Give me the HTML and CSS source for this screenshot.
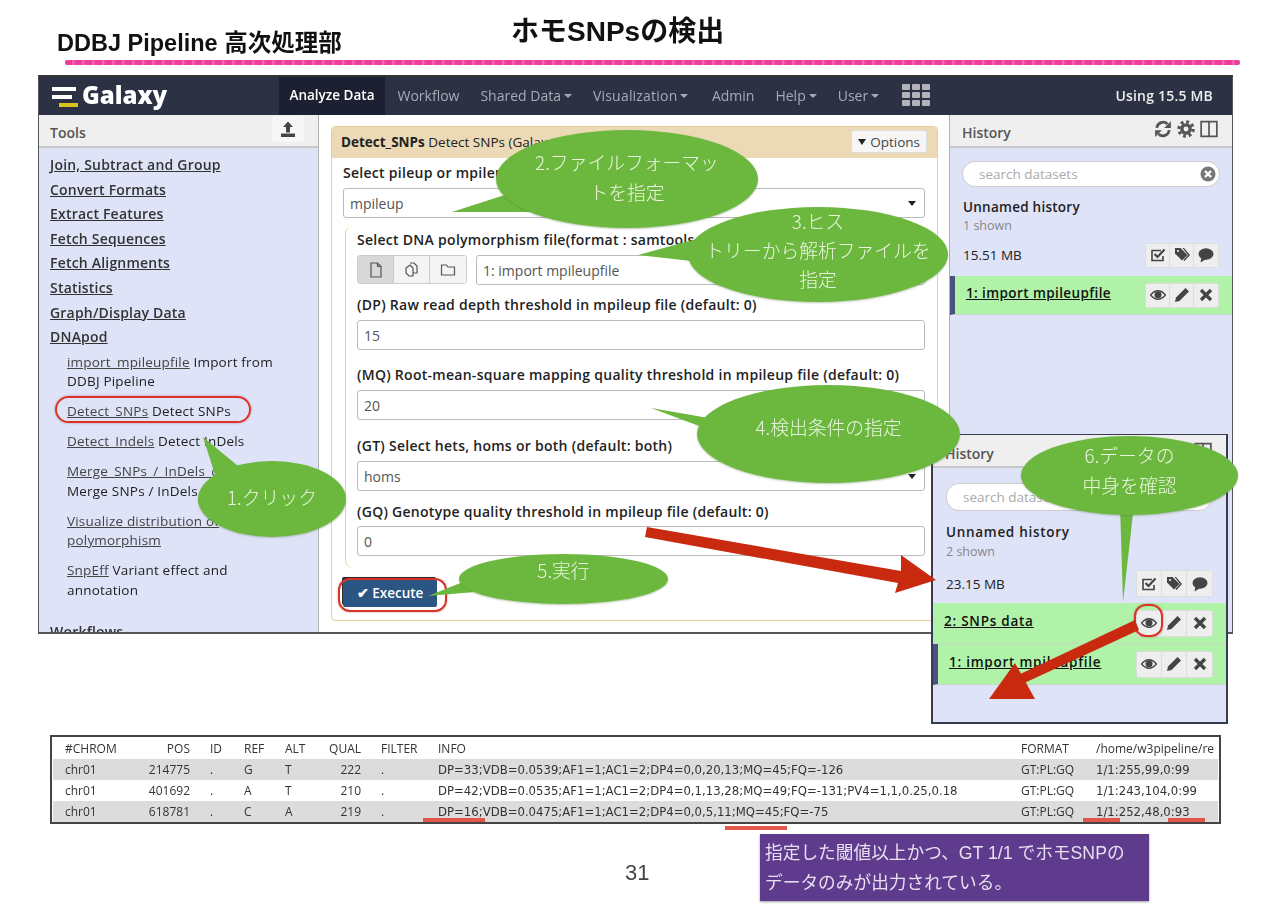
FILE: index.html

```html
<!DOCTYPE html>
<html lang="ja">
    <head>
        <meta charset="UTF-8">
        <title>ホモSNPsの検出</title>
        <link rel="stylesheet" href="styles.css">
    </head>
    <body>
    <svg class="sprite" xmlns="http://www.w3.org/2000/svg">
        <symbol id="i-upload" viewBox="0 0 16 16"><path d="M8 .5 13 6H10v5.500H6V6H3zM1 12.500h14V16H1z"/></symbol>
        <symbol id="i-refresh" viewBox="0 0 16 16"><path d="M2.500 7A5.600 5.600 0 0 1 12 3.600" fill="none" stroke="currentColor" stroke-width="2.400"/><path d="M15 1v6H9z"/><path d="M13.500 9A5.600 5.600 0 0 1 4 12.400" fill="none" stroke="currentColor" stroke-width="2.400"/><path d="M1 15V9h6z"/></symbol>
        <symbol id="i-gear" viewBox="0 0 16 16"><circle cx="8" cy="8" r="6.300" fill="none" stroke="currentColor" stroke-width="3" stroke-dasharray="2.500 2.450"/><circle cx="8" cy="8" r="3.700" fill="none" stroke="currentColor" stroke-width="3"/></symbol>
        <symbol id="i-columns" viewBox="0 0 16 16"><path d="M1 1.500h14v13H1zM8 1.500v13" fill="none" stroke="currentColor" stroke-width="1.500"/></symbol>
        <symbol id="i-clear" viewBox="0 0 16 16"><circle cx="8" cy="8" r="7.500"/><path d="M5 5l6 6M11 5l-6 6" stroke="#fff" stroke-width="2.400"/></symbol>
        <symbol id="i-check" viewBox="0 0 16 16"><path d="M13 9v4.500H2v-10h9" fill="none" stroke="currentColor" stroke-width="1.600"/><path d="M4.500 7l3 3 7-7.500" fill="none" stroke="currentColor" stroke-width="2.200"/></symbol>
        <symbol id="i-tags" viewBox="0 0 16 16"><path d="M1 1h5.500l7 7-5.500 5.500-7-7z"/><path d="M8.500 1H10l6 7-5.500 6-1-1 4.500-5z"/><circle cx="4" cy="4" r="1.100" fill="#eee"/></symbol>
        <symbol id="i-comment" viewBox="0 0 16 16"><ellipse cx="8" cy="7" rx="7.500" ry="5.700"/><path d="M3.500 10.500 2.500 15.500 8 12z"/></symbol>
        <symbol id="i-eye" viewBox="0 0 16 16"><path d="M.5 8Q8-.5 15.500 8 8 16.500.5 8z" fill="none" stroke="currentColor" stroke-width="1.300"/><circle cx="8" cy="7.800" r="3.500"/></symbol>
        <symbol id="i-pencil" viewBox="0 0 16 16"><path d="M11.500 1l3.500 3.500-9.500 9.500L1 15l1-4.500z"/></symbol>
        <symbol id="i-times" viewBox="0 0 16 16"><path d="M3 3l10 10M13 3 3 13" fill="none" stroke="currentColor" stroke-width="3.300"/></symbol>
        <symbol id="i-file" viewBox="0 0 16 16"><path d="M3 1h6.500L13 4.500V15H3zM9.500 1v3.500H13" fill="none" stroke="currentColor" stroke-width="1.200"/></symbol>
        <symbol id="i-files" viewBox="0 0 16 16"><path d="M6 1h4l3 3v7H9M2 6l4-3 3 3v8H5L2 11z" fill="none" stroke="currentColor" stroke-width="1.200"/></symbol>
        <symbol id="i-folder" viewBox="0 0 16 16"><path d="M1.500 3h5l1.500 2h6.500v8h-13z" fill="none" stroke="currentColor" stroke-width="1.200"/></symbol>
    </svg>

    <div class="slide">
        <header class="slide-head">
            <div class="title-row">
                <h2 class="subtitle">DDBJ Pipeline 高次処理部</h2>
                <h1 class="title">ホモSNPsの検出</h1>
            </div>
            <div class="pink-line"></div>
        </header>

        <div class="galaxy">
            <nav class="masthead">
                <div class="brand">
                    <svg class="logo" viewBox="0 0 26 22"><rect x="0" y="2" width="24" height="4" fill="#fff"/><rect x="0" y="10" width="20" height="4" fill="#fff"/><rect x="7" y="18" width="19" height="4" fill="#d8c61c"/></svg>
                    <span>Galaxy</span>
                </div>
                <a class="nav-item active">Analyze Data</a>
                <a class="nav-item">Workflow</a>
                <a class="nav-item caret">Shared Data</a>
                <a class="nav-item caret viz">Visualization</a>
                <a class="nav-item">Admin</a>
                <a class="nav-item caret">Help</a>
                <a class="nav-item caret">User</a>
                <div class="apps">
                    <i></i><i></i><i></i><i></i><i></i><i></i><i></i><i></i><i></i>
                </div>
                <div class="quota">Using 15.5 MB</div>
            </nav>

            <div class="panels">
                <aside class="tools">
                    <div class="panel-head">
                        <span>Tools</span>
                        <span class="upload"><svg class="icon"><use href="#i-upload"/></svg></span>
                    </div>
                    <div class="tool-list">
                        <a class="section">Join, Subtract and Group</a>
                        <a class="section">Convert Formats</a>
                        <a class="section">Extract Features</a>
                        <a class="section">Fetch Sequences</a>
                        <a class="section">Fetch Alignments</a>
                        <a class="section">Statistics</a>
                        <a class="section">Graph/Display Data</a>
                        <a class="section">DNApod</a>
                        <p class="tool first-tool"><u>import_mpileupfile</u> Import from<br>DDBJ Pipeline</p>
                        <p class="tool"><u>Detect_SNPs</u> Detect SNPs</p>
                        <p class="tool"><u>Detect_Indels</u> Detect InDels</p>
                        <p class="tool"><u>Merge_SNPs_/_InDels_data</u><br>Merge SNPs / InDels data</p>
                        <p class="tool"><u>Visualize distribution of</u><br><u>polymorphism</u></p>
                        <p class="tool"><u>SnpEff</u> Variant effect and<br>annotation</p>
                        <a class="section workflows">Workflows</a>
                    </div>
                </aside>

                <main class="center">
                    <div class="form">
                        <div class="form-head">
                            <span><b>Detect_SNPs</b> Detect SNPs (Galaxy Version 1.0.0)</span>
                            <span class="options"><i class="tri"></i>Options</span>
                        </div>
                        <div class="form-body">
                            <label class="first">Select pileup or mpileup file format</label>
                            <div class="field select">mpileup</div>
                            <div class="section-block">
                                <label>Select DNA polymorphism file(format : samtools mpileup)</label>
                                <div class="file-row">
                                    <div class="btn-group">
                                        <span class="on"><svg class="icon"><use href="#i-file"/></svg></span>
                                        <span><svg class="icon"><use href="#i-files"/></svg></span>
                                        <span><svg class="icon"><use href="#i-folder"/></svg></span>
                                    </div>
                                    <div class="field select grow">1: import mpileupfile</div>
                                </div>
                                <label class="l-dp">(DP) Raw read depth threshold in mpileup file (default: 0)</label>
                                <div class="field">15</div>
                                <label class="l-mq">(MQ) Root-mean-square mapping quality threshold in mpileup file (default: 0)</label>
                                <div class="field">20</div>
                                <label class="l-gt">(GT) Select hets, homs or both (default: both)</label>
                                <div class="field select">homs</div>
                                <label class="l-gq">(GQ) Genotype quality threshold in mpileup file (default: 0)</label>
                                <div class="field">0</div>
                            </div>
                            <button class="execute">✔ Execute</button>
                        </div>
                    </div>
                </main>

                <aside class="history">
                    <div class="panel-head">
                        <span>History</span>
                        <span class="head-icons">
                            <svg class="icon"><use href="#i-refresh"/></svg>
                            <svg class="icon"><use href="#i-gear"/></svg>
                            <svg class="icon"><use href="#i-columns"/></svg>
                        </span>
                    </div>
                    <div class="history-body">
                        <div class="search">search datasets<svg class="icon clear"><use href="#i-clear"/></svg></div>
                        <div class="history-name">Unnamed history</div>
                        <div class="history-count">1 shown</div>
                        <div class="history-meta">
                            <span>15.51 MB</span>
                            <span class="icon-btns">
                                <span><svg class="icon"><use href="#i-check"/></svg></span>
                                <span><svg class="icon"><use href="#i-tags"/></svg></span>
                                <span><svg class="icon"><use href="#i-comment"/></svg></span>
                            </span>
                        </div>
                        <div class="dataset barred">
                            <a>1: import mpileupfile</a>
                            <span class="icon-btns">
                                <span><svg class="icon"><use href="#i-eye"/></svg></span>
                                <span><svg class="icon"><use href="#i-pencil"/></svg></span>
                                <span><svg class="icon"><use href="#i-times"/></svg></span>
                            </span>
                        </div>
                    </div>
                </aside>
            </div>
        </div>

        <section class="vcf">
            <table>
                <colgroup>
                    <col class="c-chrom"><col class="c-pos"><col class="c-id"><col class="c-ref"><col class="c-alt"><col class="c-qual"><col class="c-filter"><col class="c-info"><col class="c-format"><col>
                </colgroup>
                <tr><td class="first-col">#CHROM</td><td class="num">POS</td><td class="pad">ID</td><td>REF</td><td>ALT</td><td class="num">QUAL</td><td class="pad">FILTER</td><td>INFO</td><td>FORMAT</td><td>/home/w3pipeline/re</td></tr>
                <tr class="shade"><td class="first-col">chr01</td><td class="num">214775</td><td class="pad">.</td><td>G</td><td>T</td><td class="num">222</td><td class="pad">.</td><td class="wide">DP=33;VDB=0.0539;AF1=1;AC1=2;DP4=0,0,20,13;MQ=45;FQ=-126</td><td>GT:PL:GQ</td><td class="wide">1/1:255,99,0:99</td></tr>
                <tr><td class="first-col">chr01</td><td class="num">401692</td><td class="pad">.</td><td>A</td><td>T</td><td class="num">210</td><td class="pad">.</td><td class="wide">DP=42;VDB=0.0535;AF1=1;AC1=2;DP4=0,1,13,28;MQ=49;FQ=-131;PV4=1,1,0.25,0.18</td><td>GT:PL:GQ</td><td class="wide">1/1:243,104,0:99</td></tr>
                <tr class="shade"><td class="first-col">chr01</td><td class="num">618781</td><td class="pad">.</td><td>C</td><td>A</td><td class="num">219</td><td class="pad">.</td><td class="wide">DP=16;VDB=0.0475;AF1=1;AC1=2;DP4=0,0,5,11;MQ=45;FQ=-75</td><td>GT:PL:GQ</td><td class="wide">1/1:252,48,0:93</td></tr>
            </table>
        </section>

        <footer class="slide-foot">
            <div class="page-no">31</div>
            <div class="note">指定した閾値以上かつ、GT 1/1 でホモSNPの<br>データのみが出力されている。</div>
        </footer>

        <!-- 上に重ねるもの -->
        <aside class="history history-2">
            <div class="panel-head">
                <span>History</span>
                <span class="head-icons">
                    <svg class="icon"><use href="#i-columns"/></svg>
                </span>
            </div>
            <div class="history-body">
                <div class="search">search datasets<svg class="icon clear"><use href="#i-clear"/></svg></div>
                <div class="history-name">Unnamed history</div>
                <div class="history-count">2 shown</div>
                <div class="history-meta">
                    <span>23.15 MB</span>
                    <span class="icon-btns">
                        <span><svg class="icon"><use href="#i-check"/></svg></span>
                        <span><svg class="icon"><use href="#i-tags"/></svg></span>
                        <span><svg class="icon"><use href="#i-comment"/></svg></span>
                    </span>
                </div>
                <div class="dataset">
                    <a>2: SNPs data</a>
                    <span class="icon-btns">
                        <span><svg class="icon"><use href="#i-eye"/></svg></span>
                        <span><svg class="icon"><use href="#i-pencil"/></svg></span>
                        <span><svg class="icon"><use href="#i-times"/></svg></span>
                    </span>
                </div>
                <div class="dataset barred">
                    <a>1: import mpileupfile</a>
                    <span class="icon-btns">
                        <span><svg class="icon"><use href="#i-eye"/></svg></span>
                        <span><svg class="icon"><use href="#i-pencil"/></svg></span>
                        <span><svg class="icon"><use href="#i-times"/></svg></span>
                    </span>
                </div>
            </div>
        </aside>

        <div class="ring ring-tool"></div>
        <div class="ring ring-exec"></div>
        <div class="ring ring-eye"></div>
        <div class="mark mark-a"></div>
        <div class="mark mark-b"></div>
        <div class="mark mark-c"></div>
        <div class="mark mark-d"></div>

        <svg class="overlay" viewBox="0 0 1280 904">
            <g fill="#6cb83f">
                <polygon points="203,437 238,466 216,478"/>
                <polygon points="452,212 520,190 530,212"/>
                <polygon points="638,255 700,238 700,262"/>
                <polygon points="651,408 720,420 715,432"/>
                <polygon points="428,596 468,580 475,592"/>
                <polygon points="1123,602 1120,505 1134,505"/>
            </g>
        </svg>
        <div class="callout c1">1.クリック</div>
        <div class="callout c2">2.ファイルフォーマッ<br>トを指定</div>
        <div class="callout c3">3.ヒス<br>トリーから解析ファイルを<br>指定</div>
        <div class="callout c4">4.検出条件の指定</div>
        <div class="callout c5">5.実行</div>
        <div class="callout c6">6.データの<br>中身を確認</div>
        <svg class="overlay" viewBox="0 0 1280 904">
            <g fill="#c9290f">
                <polygon points="647,527 645,537 898,583 895,593 936,580 901,555 901,571"/>
                <polygon points="1135,620 1139,630 1020,685 1016,676"/>
                <polygon points="1015,663 1035,699 989,699"/>
            </g>
        </svg>
    </div>
    </body>
</html>
```

FILE: styles.css

```css
* {
    box-sizing: border-box;
}
html, body {
    margin: 0;
    padding: 0;
    background-color: white;
}
body {
    font-family: 'Open Sans', 'Noto Sans CJK JP', sans-serif;
    font-size: 13px;
    color: #222;
}
.sprite {
    display: none;
}
.icon {
    width: 16px;
    height: 16px;
    fill: currentColor;
    display: block;
}
.slide {
    position: relative;
    width: 1280px;
    height: 904px;
    overflow: hidden;
    filter: blur(0.35px);
}

/* slide head */
.slide-head {
    height: 75px;
}
.title-row {
    display: flex;
    height: 60px;
    padding-left: 57px;
    font-family: 'Liberation Sans', 'Noto Sans CJK JP', sans-serif;
    color: #111;
}
.subtitle {
    margin: 28px 0 0;
    width: 454px;
    font-size: 23.500px;
    line-height: 30px;
    font-weight: bold;
}
.title {
    margin: 15px 0 0;
    font-size: 28px;
    line-height: 34px;
    font-weight: bold;
}
.pink-line {
    margin-left: 65px;
    width: 1175px;
    height: 5px;
    background: repeating-linear-gradient(90deg, #ee3c9c 0, #ee3c9c 7px, #f47cbc 8px, #ee3c9c 10px);
    border-radius: 2px;
}

/* galaxy window */
.galaxy {
    margin-left: 38px;
    width: 1195px;
    height: 559px;
    border: 1px solid #555;
    border-top: 2px solid #333;
    border-bottom: 2px solid #555;
    overflow: hidden;
}
.masthead {
    display: flex;
    align-items: stretch;
    height: 38px;
    background-color: #2c3143;
    color: #a8abb6;
}
.brand {
    width: 240px;
    padding-left: 13px;
    display: flex;
    align-items: center;
    gap: 4px;
    color: white;
    font-family: 'Open Sans', sans-serif;
    font-weight: 800;
    font-size: 24px;
}
.brand span {
    margin-top: -3px;
}
.logo {
    width: 26px;
    height: 24px;
}
.nav-item {
    padding: 0 10.500px 2px;
    display: flex;
    align-items: center;
    font-size: 14px;
    font-weight: 500;
}
.nav-item.active {
    margin-right: 2px;
    background-color: #1d2030;
    color: white;
    font-size: 13.500px;
    font-weight: 600;
}
.nav-item.viz {
    padding-right: 13px;
    letter-spacing: 0.2px;
}
.nav-item.caret::after {
    content: "";
    margin-left: 3px;
    margin-top: 2px;
    border-top: 4px solid #a8abb6;
    border-left: 4px solid transparent;
    border-right: 4px solid transparent;
}
.apps {
    margin: 7px 0 0 12px;
    width: 28px;
    height: 23px;
    display: grid;
    grid-template-columns: repeat(3, 8px);
    grid-auto-rows: 6px;
    gap: 2px;
}
.apps i {
    background-color: #b3b4ba;
    border-radius: 1px;
}
.quota {
    margin-left: auto;
    padding-right: 19px;
    padding-bottom: 2px;
    display: flex;
    align-items: center;
    color: #eee;
    font-size: 14px;
    letter-spacing: 0.2px;
    font-weight: 600;
}
.panels {
    display: grid;
    grid-template-columns: 280px 1fr 283px;
    height: 518px;
}
.panel-head {
    height: 33px;
    padding: 3px 11px 0;
    display: flex;
    justify-content: space-between;
    align-items: center;
    background-color: #efefef;
    border-bottom: 2px solid #c8c8c8;
    font-size: 14px;
    font-weight: 600;
    color: #555;
}

/* tools */
.tools {
    background-color: #dfe3f8;
    border-right: 1px solid #b0b0b0;
    overflow: hidden;
}
.upload {
    width: 32px;
    height: 26px;
    margin-right: 3px;
    margin-top: -7px;
    display: flex;
    align-items: center;
    justify-content: center;
    background-color: #f6f6f6;
    border-radius: 3px;
    color: #444;
}
.tool-list {
    padding: 5px 11px 0;
}
.section {
    display: block;
    width: fit-content;
    line-height: 24.600px;
    font-size: 14px;
    letter-spacing: 0.2px;
    font-weight: 600;
    color: #333;
    text-decoration: underline;
}
.tool {
    margin: 0 0 10.500px 17px;
    line-height: 19.500px;
    font-size: 13.500px;
    letter-spacing: 0.2px;
    color: #222;
}
.first-tool {
    margin-top: 3px;
}
.tool u {
    color: #444;
}
.workflows {
    margin-top: 20px;
}

/* center form */
.center {
    padding: 11px 11px 0 12px;
    background-color: white;
}
.form {
    height: 495px;
    border: 1px solid #e5cf9c;
    border-radius: 4px;
    overflow: hidden;
}
.form-head {
    height: 31px;
    padding: 0 10px 2px 9px;
    display: flex;
    justify-content: space-between;
    align-items: center;
    background-color: #ebdab5;
    font-size: 13.500px;
    color: #222;
}
.form-head b {
    font-weight: 700;
}
.options {
    display: flex;
    align-items: center;
    gap: 4px;
    height: 23px;
    padding: 0 6px;
    background-color: #f6f6f6;
    border: 1px solid #ddd;
    border-radius: 3px;
    color: #444;
}
.tri {
    border-top: 6px solid #222;
    border-left: 4px solid transparent;
    border-right: 4px solid transparent;
}
.form-body {
    padding: 0 12px 0 11px;
}
label {
    display: block;
    margin-top: 13px;
    margin-bottom: 6px;
    line-height: 18px;
    font-size: 14px;
    letter-spacing: 0.28px;
    font-weight: 600;
    color: #222;
}
label.first {
    margin-top: 6px;
}
.l-dp {
    margin-top: 11px;
}
.l-mq {
    margin-top: 16px;
}
.l-gt {
    margin-top: 17px;
}
.l-gq {
    margin-top: 12px;
    margin-bottom: 5px;
}
.field {
    position: relative;
    height: 30px;
    padding: 0 6px;
    display: flex;
    align-items: center;
    background-color: white;
    border: 1px solid #bbb;
    border-radius: 3px;
    font-size: 14px;
    color: #555;
}
.select::after {
    content: "";
    position: absolute;
    right: 8px;
    top: 12px;
    border-top: 5px solid #222;
    border-left: 4px solid transparent;
    border-right: 4px solid transparent;
}
.section-block {
    margin-top: 8px;
    margin-left: 2px;
    height: 342px;
    padding: 5px 0 0 11px;
    border-left: 1px solid #e5cf9c;
    border-radius: 8px 0 0 8px;
}
.section-block label:first-child {
    margin-top: 0;
    margin-bottom: 6px;
}
.file-row {
    display: flex;
    gap: 9px;
}
.grow {
    flex-grow: 1;
}
.btn-group {
    display: flex;
    border: 1px solid #ccc;
    border-radius: 3px;
    height: 29px;
    color: #555;
}
.btn-group span {
    width: 36px;
    display: flex;
    align-items: center;
    justify-content: center;
    background-color: #f4f4f4;
    border-right: 1px solid #ccc;
}
.btn-group span:last-child {
    border-right: none;
}
.btn-group .on {
    background-color: #d8d8d8;
}
.execute {
    margin-top: 11px;
    width: 94px;
    height: 28px;
    background-color: #2b5582;
    color: white;
    border: none;
    border-radius: 2px;
    box-shadow: -1px -2px 0 #2a2a2a;
    font-family: inherit;
    font-size: 13.500px;
    font-weight: 600;
}

/* history */
.history {
    background-color: #dfe3f8;
    border-left: 1px solid #b0b0b0;
}
.history .panel-head {
    padding-left: 12px;
}
.head-icons {
    display: flex;
    gap: 5px;
    color: #555;
    margin-right: 3px;
    margin-top: -6px;
}
.head-icons .icon {
    width: 18px;
    height: 18px;
}
.history-body {
    padding-top: 13px;
}
.search {
    position: relative;
    margin: 0 12px;
    height: 26px;
    padding-left: 16px;
    display: flex;
    align-items: center;
    background-color: white;
    border: 1px solid #ccc;
    border-radius: 13px;
    font-size: 13.500px;
    color: #aaa;
}
.clear {
    position: absolute;
    right: 3px;
    top: 4px;
    color: #777;
}
.history-name {
    margin: 10px 0 0 13px;
    line-height: 20px;
    font-size: 13.500px;
    letter-spacing: 0.25px;
    font-weight: 600;
    color: #222;
}
.history-count {
    margin-left: 13px;
    line-height: 18px;
    font-size: 12.500px;
    color: #888;
}
.history-meta {
    margin: 8px 13px 0 13px;
    height: 24px;
    display: flex;
    justify-content: space-between;
    align-items: center;
    font-size: 13.500px;
}
.icon-btns {
    display: flex;
    border: 1px solid #ddd;
    border-radius: 3px;
    color: #444;
}
.icon-btns span {
    width: 24px;
    height: 23px;
    display: flex;
    align-items: center;
    justify-content: center;
    background-color: #eee;
    border-right: 1px solid #ddd;
}
.icon-btns span:last-child {
    border-right: none;
}
.dataset {
    margin-top: 9px;
    height: 39px;
    padding: 0 13px 0 11px;
    display: flex;
    justify-content: space-between;
    align-items: center;
    background-color: #b0f3a8;
    border-bottom: 1px solid #c8d8c8;
    font-size: 13.500px;
    letter-spacing: 0.4px;
    font-weight: 600;
    color: #111;
}
.dataset a {
    text-decoration: underline;
    margin-top: -4px;
}
.barred {
    padding-left: 11px;
    border-left: 5px solid #4a5080;
}

/* floating second history */
.history-2 {
    position: absolute;
    left: 931px;
    top: 434px;
    width: 297px;
    height: 290px;
    border: 2px solid #3a3a50;
    border-top-width: 1px;
}
.history-2 .panel-head {
    padding-top: 6px;
}
.history-2 .history-body {
    padding-top: 15px;
}
.history-2 .search {
    margin: 0 14px 0 13px;
    height: 28px;
}
.history-2 .history-name {
    margin-top: 11px;
    letter-spacing: 0.7px;
}
.history-2 .history-count {
    line-height: 19px;
}
.history-2 .history-meta {
    margin: 10px 13px 0 13px;
    height: 25px;
}
.history-2 .icon-btns span {
    width: 25px;
    height: 25px;
}
.history-2 .dataset {
    margin-top: 7px;
    height: 41px;
    padding-right: 13px;
    letter-spacing: 0.75px;
}
.history-2 .dataset + .dataset {
    margin-top: 0;
}

/* vcf table */
.vcf {
    margin: 101px 0 0 50px;
    width: 1171px;
    height: 89px;
    padding: 1px;
    border: 2px solid #444;
    overflow: hidden;
}
table {
    table-layout: fixed;
    width: 1165px;
    border-collapse: collapse;
    font-size: 12px;
    color: #333;
}
td {
    height: 21px;
    padding: 0;
    white-space: nowrap;
    overflow: hidden;
}
.shade td {
    background-color: #dcdcdc;
}
.wide {
    font-family: 'DejaVu Sans', sans-serif;
    font-size: 11.700px;
}
.first-col {
    padding-left: 12px;
}
.num {
    text-align: right;
}
.pad {
    padding-left: 20px;
}
.c-chrom { width: 77px; }
.c-pos { width: 60px; }
.c-id { width: 54px; }
.c-ref { width: 41px; }
.c-alt { width: 36px; }
.c-qual { width: 40px; }
.c-filter { width: 77px; }
.c-info { width: 583px; }
.c-format { width: 75px; }

/* foot */
.slide-foot {
    position: relative;
    display: flex;
    margin-top: 10px;
    padding-left: 625px;
}
.page-no {
    width: 135px;
    padding-top: 24px;
    font-family: 'Liberation Sans', sans-serif;
    font-size: 22px;
    line-height: 30px;
    color: #444;
}
.note {
    width: 389px;
    height: 67px;
    padding: 4px 5px;
    background-color: #5f3b8e;
    box-shadow: 0 1px 2px rgba(0,0,0,0.4);
    font-family: 'Liberation Sans', 'Noto Sans CJK JP', sans-serif;
    font-size: 17.700px;
    line-height: 30px;
    color: #e8e0f0;
}

/* overlays */
.ring {
    position: absolute;
    border: 2px solid #dc3328;
    box-shadow: 0 0 2px rgba(120,30,30,0.5);
}
.ring-tool {
    left: 55px;
    top: 396px;
    width: 196px;
    height: 27px;
    border-radius: 14px;
}
.ring-exec {
    left: 338px;
    top: 578px;
    width: 109px;
    height: 34px;
    border-radius: 12px;
}
.ring-eye {
    left: 1134px;
    top: 604px;
    width: 29px;
    height: 33px;
    border-radius: 12px;
}
.mark {
    position: absolute;
    height: 4px;
    background-color: #e2574c;
}
.mark-a { left: 423px; top: 818px; width: 62px; }
.mark-b { left: 725px; top: 826px; width: 62px; }
.mark-c { left: 1083px; top: 818px; width: 37px; }
.mark-d { left: 1168px; top: 818px; width: 37px; }
.overlay {
    position: absolute;
    left: 0;
    top: 0;
    width: 1280px;
    height: 904px;
    pointer-events: none;
}
.callout {
    position: absolute;
    display: flex;
    align-items: center;
    justify-content: center;
    text-align: center;
    background-color: #6cb83f;
    border-radius: 50%;
    box-shadow: 0 1px 2px rgba(80,120,60,0.4);
    font-family: 'Noto Sans CJK JP', sans-serif;
    font-weight: 300;
    font-size: 18.800px;
    color: #eaf5e0;
}
.c1 { left: 198px; top: 461px; width: 148px; height: 76px; padding-bottom: 6px; }
.c2 { left: 496px; top: 130px; width: 262px; height: 98px; line-height: 30px; padding-bottom: 4px; }
.c3 { left: 688px; top: 207px; width: 260px; height: 95px; line-height: 29px; padding-bottom: 10px; }
.c4 { left: 697px; top: 385px; width: 263px; height: 98px; padding-bottom: 16px; }
.c5 { left: 459px; top: 554px; width: 209px; height: 50px; padding-bottom: 20px; }
.c6 { left: 1021px; top: 436px; width: 217px; height: 79px; line-height: 30px; padding-bottom: 12px; }
```
